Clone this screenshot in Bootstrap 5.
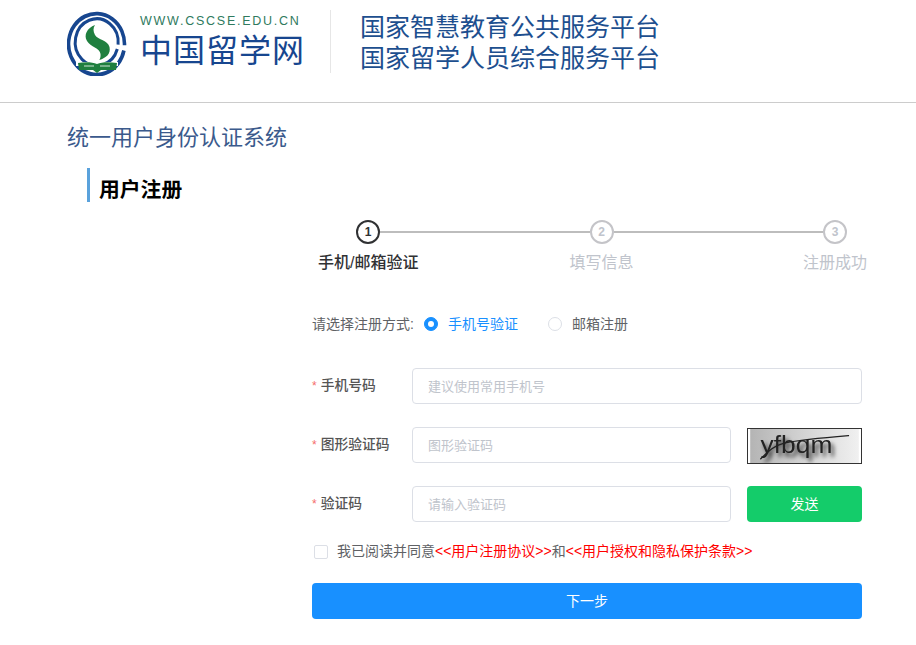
<!DOCTYPE html>
<html lang="zh-CN">
<head>
    <meta charset="UTF-8">
    <meta name="viewport" content="width=device-width, initial-scale=1.0">
    <title>用户注册</title>
    <link href="https://cdn.jsdelivr.net/npm/bootstrap@5.3.3/dist/css/bootstrap.min.css" rel="stylesheet">
    <style>
        body {
            font-family: "Liberation Sans", "Noto Sans CJK SC", sans-serif;
            color: #606266;
            overflow-x: hidden;
        }

        .site-header {
            height: 103px;
            border-bottom: 1px solid #ccc;
            padding: 10px 0 0 67px;
        }

        .logo-text { width: 170px; margin-left: 13px; }
        .logo-url { font-size: 12.5px; line-height: 15px; letter-spacing: 1.75px; color: #2f7a5e; margin-top: 4px; white-space: nowrap; }
        .logo-name { font-size: 32px; line-height: 38px; letter-spacing: 1px; color: #17468f; white-space: nowrap; margin-top: 3px; font-family: "Liberation Serif", "Noto Sans CJK SC", serif; }
        .header-divider { width: 1px; height: 63px; background: #e6e6e6; margin-left: 20px; }
        .platform-name { font-size: 25px; line-height: 31px; color: #1d4f8f; margin: 2px 0 0 29px; white-space: nowrap; }

        .system-title { font-size: 22px; line-height: 30px; color: #3b5a8c; margin: 20px 0 0 67px; font-weight: 400; }
        .page-title { font-size: 20.8px; height: 34px; line-height: 44px; color: #000; font-weight: 700; border-left: 3px solid #5aa2dc; margin: 15px 0 0 87px; padding-left: 9px; }

        .steps { margin: 18px 0 0 318px; width: 567px; }
        .step-track { margin: 0 38px; }
        .step-dot { width: 24px; height: 24px; border: 2px solid #c4c4c8; border-radius: 50%; color: #c0c4cc; font-size: 12px; font-weight: 700; flex: none; }
        .step-dot.active { border-color: #303133; color: #303133; }
        .step-line { height: 2px; background: #bdbdbd; flex: 1; }
        .step-label { width: 100px; font-size: 16px; line-height: 24px; color: #c0c4cc; text-align: center; white-space: nowrap; margin-top: 7px; }
        .step-label.active { color: #303133; font-weight: 500; }

        .reg-form { width: 550px; margin: 37px 0 0 312px; font-size: 14px; }
        .mode-row { height: 24px; margin-bottom: 32px; }
        .mode-label { width: 112px; white-space: nowrap; }
        .form-check-input.reg-radio { width: 14px; height: 14px; margin: 0 10px 0 0; border-color: #dcdfe6; }
        .form-check-input.reg-radio:checked { background-color: #1890ff; border-color: #1890ff; }
        .mode-option { font-size: 14px; margin-right: 30px; }
        .mode-option.checked { color: #1890ff; }

        .field-row { height: 36px; margin-bottom: 23px; }
        .field-label { width: 100px; font-size: 13.8px; font-weight: 500; color: #555; flex: none; white-space: nowrap; }
        .field-label span { color: #f56c6c; margin-right: 4px; font-size: 12px; }
        .form-control.reg-input { height: 36px; min-height: 36px; padding: 0 15px; border-color: #dcdfe6; border-radius: 4px; font-size: 13px; }
        .reg-input::placeholder { color: #c0c4cc; opacity: 1; }
        .side-item { width: 115px; height: 36px; flex: none; margin-left: 16px; }
        .captcha-box { margin-top: 2px; }
        .captcha { display: block; border: 1px solid #333; }
        .btn.btn-send { background: #14cc6a; border: 0; color: #fff; font-size: 14px; border-radius: 4px; }

        .agree-row { height: 18px; margin: -2px 0 22px; padding-left: 2px; }
        .agree-row span { margin-top: -2px; }
        .form-check-input.reg-check { width: 14px; height: 14px; margin: 0 9px 0 0; border-color: #dcdfe6; border-radius: 2px; }
        .agree-row a { color: #f00; text-decoration: none; }

        .btn.btn-next { height: 36px; background: #1890ff; border: 0; color: #fff; font-size: 14px; border-radius: 4px; }
    </style>
</head>
<body>

<header class="site-header d-flex align-items-start">
    <svg width="60" height="66" viewBox="0 0 60 66" class="flex-shrink-0">
        <g fill="none" stroke="#17468f" transform="translate(0 32) scale(1 1.09) translate(0 -32)">
            <path d="M56.9 39.8 A28 28 0 1 1 57.5 35" stroke-width="3.6"/>
            <path d="M50.3 38.4 A21.5 21.5 0 1 1 51.1 34.4" stroke-width="3"/>
        </g>
        <path d="M28 15 C20 18 16.5 25 20 31 C23.5 37 33 38 33.5 44 C33.8 47 33 49 32.3 50 C39 48 44 44 42.5 37 C41 30 31 30 28 25 C26 21 26 18 28 15Z" fill="#1f7f3f"/>
        <path d="M9 52 H51 V56 H9Z" fill="#fff"/>
        <path d="M11 53 C18 52 25 52 30 54 C35 52 42 52 50 53 L49 60 H34 L30 63 L26 60 H12Z" fill="#1f7f3f"/>
        <path d="M17 56 H27 M33 56 H43" stroke="#fff" stroke-width="0.8"/>
    </svg>
    <div class="logo-text">
        <div class="logo-url">WWW.CSCSE.EDU.CN</div>
        <div class="logo-name">中国留学网</div>
    </div>
    <div class="header-divider"></div>
    <div class="platform-name">国家智慧教育公共服务平台<br>国家留学人员综合服务平台</div>
</header>

<h1 class="system-title">统一用户身份认证系统</h1>
<h2 class="page-title">用户注册</h2>

<div class="steps">
    <div class="step-track d-flex align-items-center">
        <div class="step-dot active d-flex align-items-center justify-content-center">1</div>
        <div class="step-line"></div>
        <div class="step-dot d-flex align-items-center justify-content-center">2</div>
        <div class="step-line"></div>
        <div class="step-dot d-flex align-items-center justify-content-center">3</div>
    </div>
    <div class="d-flex justify-content-between">
        <div class="step-label active">手机/邮箱验证</div>
        <div class="step-label">填写信息</div>
        <div class="step-label">注册成功</div>
    </div>
</div>

<form class="reg-form">
    <div class="mode-row d-flex align-items-center">
        <span class="mode-label">请选择注册方式:</span>
        <input class="form-check-input reg-radio" type="radio" name="mode" checked>
        <span class="mode-option checked">手机号验证</span>
        <input class="form-check-input reg-radio" type="radio" name="mode">
        <span class="mode-option">邮箱注册</span>
    </div>

    <div class="field-row d-flex align-items-center">
        <label class="field-label"><span>*</span>手机号码</label>
        <input type="text" class="form-control reg-input" placeholder="建议使用常用手机号">
    </div>

    <div class="field-row d-flex align-items-center">
        <label class="field-label"><span>*</span>图形验证码</label>
        <input type="text" class="form-control reg-input" placeholder="图形验证码">
        <div class="side-item captcha-box">
            <svg class="captcha" width="115" height="36" viewBox="0 0 115 36">
                <defs>
                    <linearGradient id="capBg" x1="0" x2="1" y1="0" y2="0">
                        <stop offset="0" stop-color="#b4b4b4"/>
                        <stop offset="0.5" stop-color="#d4d4d4"/>
                        <stop offset="1" stop-color="#f0f0f0"/>
                    </linearGradient>
                    <filter id="capShadow" x="-20%" y="-20%" width="140%" height="160%">
                        <feDropShadow dx="3" dy="4" stdDeviation="2.5" flood-color="#000" flood-opacity="0.8"/>
                    </filter>
                </defs>
                <rect width="115" height="36" fill="url(#capBg)"/>
                <text x="11" y="25" font-family="Liberation Sans, sans-serif" font-size="25" fill="#222" filter="url(#capShadow)" textLength="76" lengthAdjust="spacingAndGlyphs">yfbqm</text>
                <path d="M10.7 32 C18 25 24 18 36 15 C55 11 80 9 104.7 7" fill="none" stroke="#222" stroke-width="1.4"/>
            </svg>
        </div>
    </div>

    <div class="field-row d-flex align-items-center">
        <label class="field-label"><span>*</span>验证码</label>
        <input type="text" class="form-control reg-input" placeholder="请输入验证码">
        <button type="button" class="btn btn-send side-item p-0">发送</button>
    </div>

    <div class="agree-row d-flex align-items-center">
        <input class="form-check-input reg-check" type="checkbox">
        <span>我已阅读并同意<a href="#">&lt;&lt;用户注册协议&gt;&gt;</a>和<a href="#">&lt;&lt;用户授权和隐私保护条款&gt;&gt;</a></span>
    </div>

    <button type="button" class="btn btn-next w-100 p-0">下一步</button>
</form>

<script src="https://cdn.jsdelivr.net/npm/bootstrap@5.3.3/dist/js/bootstrap.bundle.min.js"></script>
</body>
</html>
